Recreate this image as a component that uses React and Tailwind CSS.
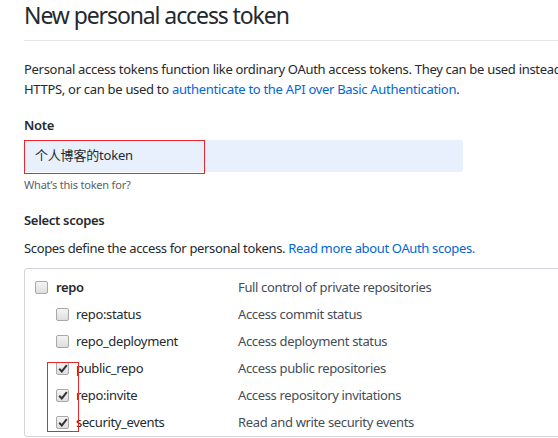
const font = { fontFamily: '"Noto Sans", "Noto Sans CJK SC", sans-serif' };

const scopes = [
  { name: 'repo', desc: 'Full control of private repositories', top: true, checked: false },
  { name: 'repo:status', desc: 'Access commit status', checked: false },
  { name: 'repo_deployment', desc: 'Access deployment status', checked: false },
  { name: 'public_repo', desc: 'Access public repositories', checked: true },
  { name: 'repo:invite', desc: 'Access repository invitations', checked: true },
  { name: 'security_events', desc: 'Read and write security events', checked: true },
];

function Checkbox({ checked }) {
  return (
    <span className="relative flex h-[13px] w-[13px] shrink-0 items-center justify-center rounded-[2px] border border-[#a8a8a8] bg-gradient-to-b from-[#f4f4f4] to-[#dedede]">
      {checked && (
        <svg width="10" height="9" viewBox="0 0 10 9">
          <path d="M1.2 4.8 L3.8 7.4 L8.8 1.2" fill="none" stroke="#333" strokeWidth="2" />
        </svg>
      )}
    </span>
  );
}

export default function App() {
  return (
    <div className="relative h-[438px] w-[558px] overflow-hidden bg-white text-[#24292e]" style={font}>
      <div className="w-[1000px] pl-6">
        <h1 className="border-b border-[#e1e4e8] pb-[10px] text-[23px] font-normal leading-[30px] tracking-[-1.1px]">New personal access token</h1>

        <p className="mt-[18px] whitespace-nowrap text-[13px] leading-5 tracking-[-0.3px]">
          Personal access tokens function like ordinary OAuth access tokens. They can be used instead of a password for Git over
          <br />
          HTTPS, or can be used to <span className="text-[#0366d6]">authenticate to the API over Basic Authentication</span>.
        </p>

        <div className="mt-4 text-[13px] font-semibold leading-5 tracking-[-0.3px]">Note</div>
        <div className="mt-[5px] flex h-8 w-[439px] items-center rounded-[3px] bg-[#e8f0fe] pl-[11px] text-[13px] tracking-[-0.2px]">
          个人博客的token
        </div>
        <div className="mt-1 text-[11px] leading-[18px] tracking-[-0.2px] text-[#586069]">What’s this token for?</div>

        <div className="mt-4 text-[13px] font-semibold leading-5 tracking-[-0.3px]">Select scopes</div>
        <p className="mt-2 text-[13px] leading-5 tracking-[-0.35px]">
          Scopes define the access for personal tokens. <span className="text-[#0366d6]">Read more about OAuth scopes.</span>
        </p>

        <div className="mt-[10px] w-[700px] rounded-[3px] border border-[#d1d5da] pl-[10px] pt-[5px]">
          {scopes.map((s) => (
            <div key={s.name} className="flex h-[27px] items-center text-[13px] tracking-[-0.35px]">
              <div className={`flex w-[203px] items-center ${s.top ? 'gap-2' : 'gap-[7px] pl-[21px]'}`}>
                <Checkbox checked={s.checked} />
                <span className={s.top ? 'font-semibold' : ''}>{s.name}</span>
              </div>
              <span className="text-[#444d56]">{s.desc}</span>
            </div>
          ))}
        </div>
      </div>

      <div className="absolute left-6 top-[140px] h-[34px] w-[181px] border border-[#e8282b]" />
      <div className="absolute left-[47px] top-[362px] h-[70px] w-[32px] border border-[#e8282b]" />
    </div>
  );
}
